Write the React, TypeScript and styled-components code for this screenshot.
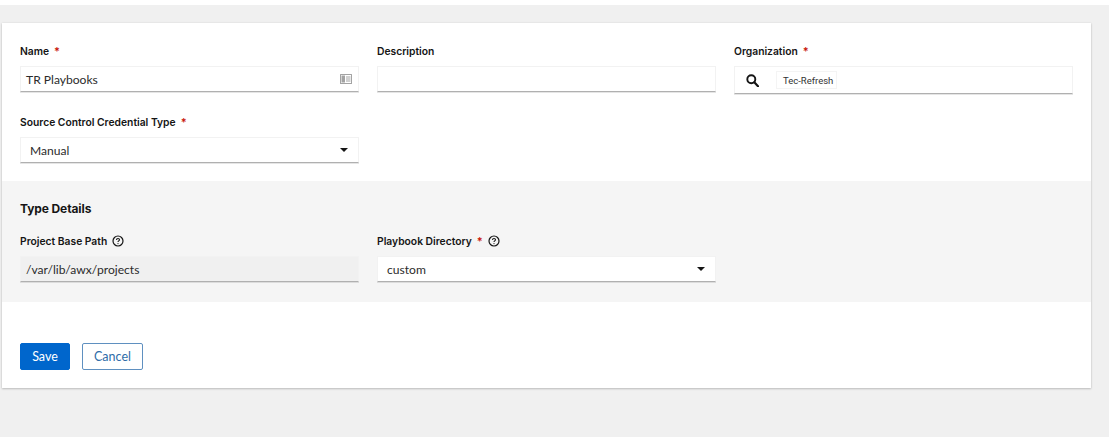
import React from 'react'
import styled, { createGlobalStyle } from 'styled-components'

const GlobalStyle = createGlobalStyle`
  html, body {
    margin: 0;
    padding: 0;
    background: #fff;
  }
  body {
    font-family: 'Inter', 'Liberation Sans', sans-serif;
    color: #151515;
  }
  * { box-sizing: border-box; }
`

const Page = styled.div`
  margin-top: 5px;
  height: 432px;
  padding: 18px 18px 0 2px;
  background: #f0f0f0;
`

const Card = styled.form`
  height: 365px;
  display: flex;
  flex-direction: column;
  background: #fff;
  box-shadow: 0 1px 2px rgba(3, 3, 3, 0.2), 0 0 2px rgba(3, 3, 3, 0.08);
`

const Grid = styled.div`
  display: grid;
  grid-template-columns: repeat(3, 339px);
  column-gap: 18px;
  row-gap: 21px;
  align-items: start;
  align-content: start;
`

const TopFields = styled(Grid)`
  height: 158px;
  padding: 21px 18px 0;
`

const SubSection = styled.section`
  height: 121px;
  padding: 20px 18px 0;
  background: #f5f5f5;
`

const SubTitle = styled.h2`
  margin: 0 0 18px;
  font-size: 12px;
  line-height: 15px;
  font-weight: 700;
  letter-spacing: -0.1px;
`

const Field = styled.div`
  display: flex;
  flex-direction: column;
  gap: 8px;
`

const Label = styled.label`
  display: flex;
  align-items: center;
  height: 14px;
  font-size: 10.3px;
  font-weight: 600;
  color: #151515;
`

const Required = styled.span`
  margin-left: 5px;
  font-size: 11px;
  color: #c9190b;
`

const Help = styled.svg`
  margin-left: 5px;
  width: 12px;
  height: 12px;
`

const InputBox = styled.div<{ $readOnly?: boolean; $tall?: boolean }>`
  display: flex;
  align-items: center;
  justify-content: space-between;
  height: ${(p) => (p.$tall ? '28px' : '26px')};
  padding: 0 6px 0 5px;
  background: ${(p) => (p.$readOnly ? '#f0f0f0' : '#fff')};
  border: 1px solid #f2f2f2;
  border-bottom: 1px solid #b0b0b0;
  box-shadow: 0 1px 0 rgba(0, 0, 0, 0.1);
  font-family: 'Lato', 'Liberation Sans', sans-serif;
  font-size: 12.1px;
  color: #2b2b2b;
`

const SelectBox = styled(InputBox)`
  padding: 0 10px 0 9px;
`

const Caret = styled.span`
  width: 0;
  height: 0;
  border-left: 4.5px solid transparent;
  border-right: 4.5px solid transparent;
  border-top: 4.5px solid #151515;
`

const LookupBox = styled(InputBox)`
  justify-content: flex-start;
  padding: 0;
`

const SearchCell = styled.span`
  display: flex;
  align-items: center;
  justify-content: center;
  width: 25px;
  margin-left: 5px;
  margin-right: 11px;
`

const Chip = styled.span`
  display: flex;
  align-items: center;
  height: 18px;
  padding: 0 3px 0 6px;
  border: 1px solid #f4f4f4;
  font-family: 'Roboto', 'Liberation Sans', sans-serif;
  font-size: 9.5px;
  color: #333;
`

const Actions = styled.div`
  display: flex;
  gap: 12px;
  padding: 41px 18px 0;
`

const Button = styled.button<{ $primary?: boolean }>`
  height: 27px;
  padding: 0;
  width: ${(p) => (p.$primary ? '50px' : '61px')};
  border-radius: 2px;
  border: 1px solid ${(p) => (p.$primary ? '#0066cc' : '#5f90c0')};
  background: ${(p) => (p.$primary ? '#0066cc' : '#fff')};
  color: ${(p) => (p.$primary ? '#fff' : '#2f6ca8')};
  font-family: 'Lato', 'Liberation Sans', sans-serif;
  font-size: 12.5px;
`

const HelpIcon = () => (
  <Help viewBox="0 0 12 12" fill="none" stroke="#151515">
    <circle cx="6" cy="6" r="5" strokeWidth="1.2" />
    <path d="M4.5 4.9c0-.9.7-1.4 1.5-1.4s1.5.5 1.5 1.3c0 1.1-1.5 1.1-1.5 2.2" strokeWidth="1.1" />
    <circle cx="6" cy="8.6" r="0.6" fill="#151515" stroke="none" />
  </Help>
)

const CardIcon = () => (
  <svg width="12" height="10" viewBox="0 0 12 10">
    <path
      fill="#a3a3a3"
      fillRule="evenodd"
      d="M0.5 0h11a.5.5 0 0 1 .5.5v9a.5.5 0 0 1-.5.5h-11a.5.5 0 0 1-.5-.5v-9a.5.5 0 0 1 .5-.5zM1 1v8h10V1zM1.5 1.5h3.5v7H1.500zM6 2.500h4.500v1H6zM6 4.500h4.500v1H6zM6 6.500h4.500v1H6z"
    />
  </svg>
)

const SearchIcon = () => (
  <svg width="13" height="13" viewBox="0 0 13 13" fill="none" stroke="#151515">
    <circle cx="5.3" cy="5.3" r="4" strokeWidth="1.9" />
    <path d="M8.3 8.3l3.7 3.9" strokeWidth="2.2" strokeLinecap="round" />
  </svg>
)

export default function App() {
  return (
    <>
      <GlobalStyle />
      <Page>
        <Card>
          <TopFields>
            <Field>
              <Label>
                Name <Required>*</Required>
              </Label>
              <InputBox>
                TR Playbooks
                <CardIcon />
              </InputBox>
            </Field>
            <Field>
              <Label>Description</Label>
              <InputBox />
            </Field>
            <Field>
              <Label>
                Organization <Required>*</Required>
              </Label>
              <LookupBox $tall>
                <SearchCell>
                  <SearchIcon />
                </SearchCell>
                <Chip>Tec-Refresh</Chip>
              </LookupBox>
            </Field>
            <Field>
              <Label>
                Source Control Credential Type <Required>*</Required>
              </Label>
              <SelectBox>
                Manual
                <Caret />
              </SelectBox>
            </Field>
          </TopFields>
          <SubSection>
            <SubTitle>Type Details</SubTitle>
            <Grid>
              <Field>
                <Label>
                  Project Base Path
                  <HelpIcon />
                </Label>
                <InputBox $readOnly>/var/lib/awx/projects</InputBox>
              </Field>
              <Field>
                <Label>
                  Playbook Directory <Required>*</Required>
                  <HelpIcon />
                </Label>
                <SelectBox>
                  custom
                  <Caret />
                </SelectBox>
              </Field>
            </Grid>
          </SubSection>
          <Actions>
            <Button type="button" $primary>
              Save
            </Button>
            <Button type="button">Cancel</Button>
          </Actions>
        </Card>
      </Page>
    </>
  )
}
